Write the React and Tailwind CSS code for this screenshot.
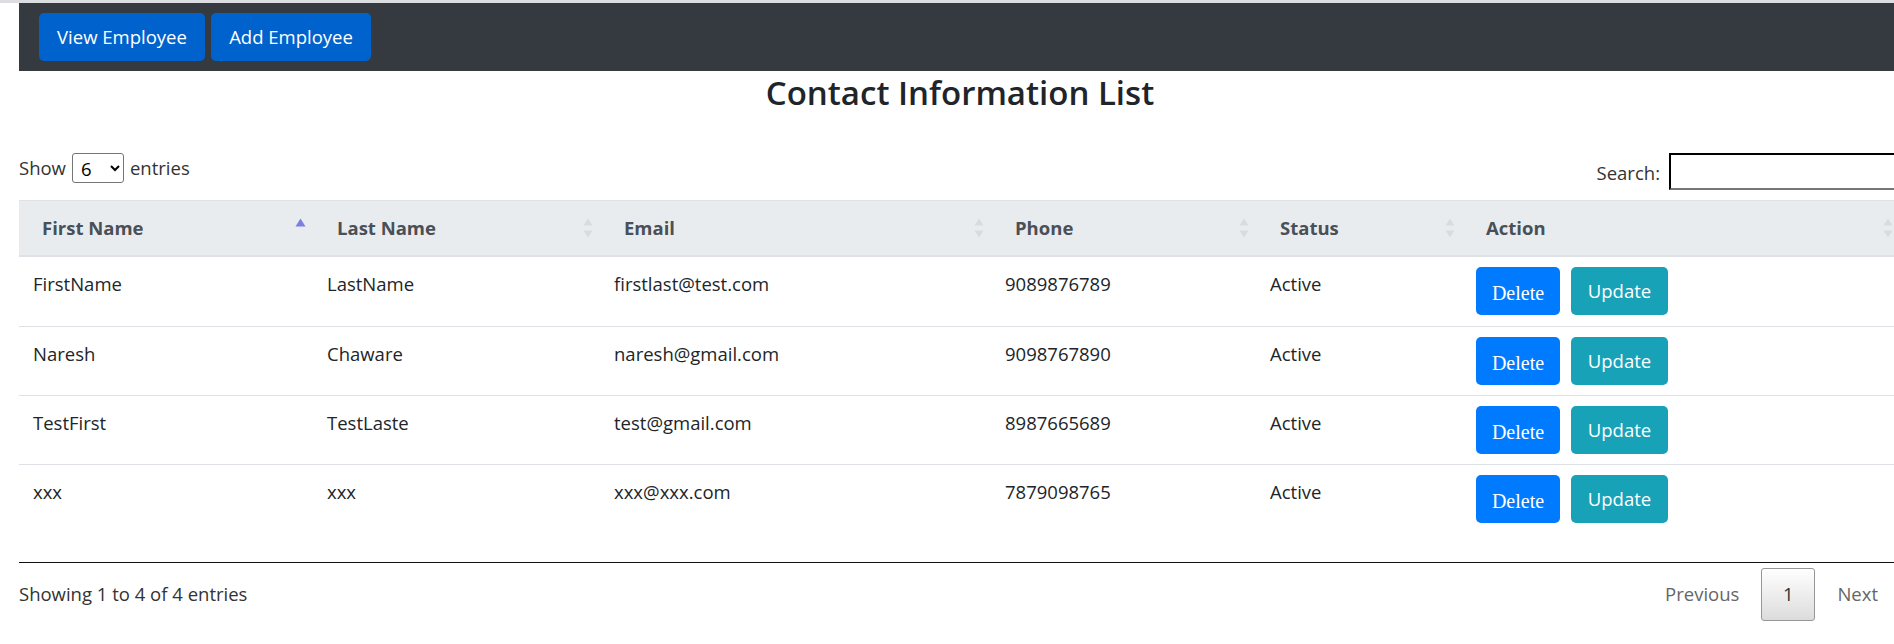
import React from "react";

const rows = [
  ["FirstName", "LastName", "firstlast@test.com", "9089876789", "Active"],
  ["Naresh", "Chaware", "naresh@gmail.com", "9098767890", "Active"],
  ["TestFirst", "TestLaste", "test@gmail.com", "8987665689", "Active"],
  ["xxx", "xxx", "xxx@xxx.com", "7879098765", "Active"],
];

const cols = "grid grid-cols-[295px_287px_391px_265px_206px_438px]";

function SortBoth() {
  return (
    <svg width="10" height="19" viewBox="0 0 10 19" className="absolute right-[8px] top-1/2 -translate-y-1/2">
      <path d="M5 0 L9.5 7 H0.5Z" fill="#d9dbde" />
      <path d="M5 19 L9.5 12 H0.5Z" fill="#d9dbde" />
    </svg>
  );
}

function SortAsc() {
  return (
    <svg width="11" height="19" viewBox="0 0 11 19" className="absolute right-[8px] top-1/2 -translate-y-1/2">
      <path d="M5.5 0 L10.5 8 H0.5Z" fill="#7d7de3" />
    </svg>
  );
}

export default function App() {
  const headers = ["First Name", "Last Name", "Email", "Phone", "Status", "Action"];
  return (
    <div className="w-screen h-[644px] overflow-hidden bg-white font-['Open_Sans',sans-serif] text-[18.5px] text-[#212529]">
      <div className="h-[3px] bg-[#dcdde0]" />
      <div className="ml-[19px] w-[1882px]">
        <nav className="h-[68px] bg-[#343a40] flex items-center gap-[6px] px-[20px]">
          <button className="h-[48px] w-[166px] rounded-[5px] bg-[#0062cc] text-white font-['Open_Sans',sans-serif] text-[18.5px]">View Employee</button>
          <button className="h-[48px] w-[160px] rounded-[5px] bg-[#0062cc] text-white font-['Open_Sans',sans-serif] text-[18.5px]">Add Employee</button>
        </nav>

        <h2 className="text-center text-[33px] font-semibold leading-[44px] text-[#212529]">
          Contact Information List
        </h2>

        <div className="mt-[38px] h-[47px] flex justify-between items-start">
          <div className="flex items-center h-[30px] text-[#333]">
            <span>Show</span>
            <select className="ml-[6px] h-[30px] w-[52px] border border-[#767676] rounded-[3px] pl-[4px] font-['Open_Sans',sans-serif] text-[18.5px] text-black bg-white" defaultValue="6">
              <option value="6">6</option>
              <option value="10">10</option>
            </select>
            <span className="ml-[6px]">entries</span>
          </div>
          <div className="flex items-center h-[37px] text-[#333]">
            <span className="mr-[9px] mt-[3px]">Search:</span>
            <input className="w-[232px] h-[37px] border-2 border-t-black border-l-black border-b-[#767676] border-r-[#767676] bg-white outline-none" />
          </div>
        </div>

        <div className={`${cols} h-[57px] bg-[#e9ecef] border-t border-b-2 border-[#dee2e6]`}>
          {headers.map((h, i) => (
            <div key={h} className="relative flex items-center pl-[23px] font-bold text-[#495057]">
              {h}
              {i === 0 ? <SortAsc /> : <SortBoth />}
            </div>
          ))}
        </div>

        {rows.map((r, ri) => (
          <div key={ri} className={`${cols} h-[69px] ${ri > 0 ? "border-t border-[#dee2e6]" : ""}`}>
            {r.map((c, ci) => (
              <div key={ci} className={`${ci === 0 ? "pl-[14px]" : "pl-[13px]"} pt-[12px] leading-[30px]`}>
                {c}
              </div>
            ))}
            <div className="pl-[13px] pt-[10px] flex items-start gap-[11px]">
              <button className="h-[48px] w-[84px] rounded-[5px] bg-[#007bff] text-white font-['Liberation_Serif',serif] text-[20px] pt-[3px]">Delete</button>
              <button className="h-[48px] w-[97px] rounded-[5px] bg-[#17a2b8] text-white">
                <span className="font-['Open_Sans',sans-serif] text-[18.5px]">Update</span>
              </button>
            </div>
          </div>
        ))}

        <div className="h-[29px]" />
        <div className="h-px bg-[#111]" />

        <div className="mt-[5px] h-[52px] flex justify-between items-center">
          <span className="text-[#333]">Showing 1 to 4 of 4 entries</span>
          <div className="flex items-center h-[52px] mr-[3px]">
            <span className="px-[20px] text-[#666]">Previous</span>
            <span className="ml-[2px] w-[54px] h-[53px] flex items-center justify-center border border-[#979797] rounded-[3px] bg-gradient-to-b from-white to-[#dcdcdc] text-[#333]">1</span>
            <span className="ml-[2px] px-[20px] text-[#666]">Next</span>
          </div>
        </div>
      </div>
    </div>
  );
}
